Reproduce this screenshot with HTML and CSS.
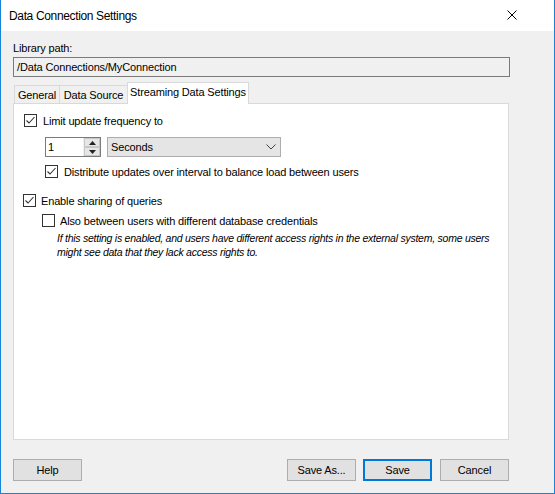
FILE: index.html
```html
<!DOCTYPE html>
<html>
<head>
<meta charset="utf-8">
<link rel="stylesheet" href="styles.css">
</head>
<body>
<div class="window">
  <div class="titlebar">
    <span class="title">Data Connection Settings</span>
    <svg class="close" width="10" height="10" viewBox="0 0 10 10"><path d="M0.5 0.5L9.5 9.5M9.5 0.5L0.5 9.5" stroke="#000" stroke-width="1" fill="none"/></svg>
  </div>
  <div class="body">
    <div class="label">Library path:</div>
    <div class="pathbox">/Data Connections/MyConnection</div>
    <div class="tabs">
      <div class="tab t1">General</div>
      <div class="tab t2">Data Source</div>
      <div class="tab active">Streaming Data Settings</div>
    </div>
    <div class="panel">
      <div class="row r1">
        <span class="cb checked"><svg width="11" height="11" viewBox="0 0 11 11"><path d="M1.5 5.5L4 8L9.5 2" stroke="#333" stroke-width="1.1" fill="none"/></svg></span>
        <span>Limit update frequency to</span>
      </div>
      <div class="controls">
        <div class="spin">
          <div class="num">1</div>
          <div class="arrows">
            <div class="arr"><svg width="7" height="4" viewBox="0 0 7 4"><path d="M0 4L3.5 0L7 4Z" fill="#222"/></svg></div>
            <div class="arr"><svg width="7" height="4" viewBox="0 0 7 4"><path d="M0 0L3.5 4L7 0Z" fill="#222"/></svg></div>
          </div>
        </div>
        <div class="combo">
          <span>Seconds</span>
          <svg width="10" height="6" viewBox="0 0 10 6"><path d="M0.5 0.5L5 5L9.5 0.5" stroke="#444" stroke-width="1" fill="none"/></svg>
        </div>
      </div>
      <div class="row r2">
        <span class="cb checked"><svg width="11" height="11" viewBox="0 0 11 11"><path d="M1.5 5.5L4 8L9.5 2" stroke="#333" stroke-width="1.1" fill="none"/></svg></span>
        <span>Distribute updates over interval to balance load between users</span>
      </div>
      <div class="row r3">
        <span class="cb checked"><svg width="11" height="11" viewBox="0 0 11 11"><path d="M1.5 5.5L4 8L9.5 2" stroke="#333" stroke-width="1.1" fill="none"/></svg></span>
        <span>Enable sharing of queries</span>
      </div>
      <div class="row r4">
        <span class="cb"></span>
        <span>Also between users with different database credentials</span>
      </div>
      <div class="note">If this setting is enabled, and users have different access rights in the external system, some users might see data that they lack access rights to.</div>
    </div>
    <div class="buttons">
      <div class="btn">Help</div>
      <div class="spacer"></div>
      <div class="btn">Save As...</div>
      <div class="btn default">Save</div>
      <div class="btn last">Cancel</div>
    </div>
  </div>
</div>
</body>
</html>
```
FILE: styles.css
```css
html, body { margin: 0; padding: 0; }
body {
  font-family: "Liberation Sans", Arial, sans-serif;
  font-size: 11px;
  letter-spacing: -0.15px;
  color: #000;
  background: #fff;
}
.window {
  width: 555px;
  height: 494px;
  box-sizing: border-box;
  border: 1px solid #1883d7;
  border-top: none;
  background: #f0f0f0;
  display: flex;
  flex-direction: column;
}
.titlebar {
  height: 31px;
  background: #fff;
  display: flex;
  align-items: center;
  padding: 0 0 0 8px;
  box-sizing: border-box;
}
.title { flex: 1; font-size: 12px; letter-spacing: -0.35px; padding-top: 1px; }
.close { margin-right: 37px; margin-bottom: 2px; }
.body {
  flex: 1;
  padding: 0 0 0 12px;
  display: flex;
  flex-direction: column;
}
.label { margin-top: 10px; height: 15px; line-height: 15px; }
.pathbox {
  margin-top: 1px;
  height: 20px;
  box-sizing: border-box;
  border: 1px solid #7a7a7a;
  width: 497px;
  background: #f0f0f0;
  line-height: 18px;
  padding-left: 3px;
}
.tabs {
  margin-top: 5px;
  display: flex;
  align-items: flex-end;
  padding-left: 1px;
  height: 21px;
  position: relative;
  z-index: 1;
}
.tab {
  height: 18px;
  line-height: 18px;
  box-sizing: border-box;
  border: 1px solid #d9d9d9;
  border-bottom: none;
  border-right: none;
  background: #f0f0f0;
  text-align: center;
}
.t1 { width: 45px; }
.t2 { width: 68px; }
.tab.active {
  width: 122px;
  height: 22px;
  line-height: 19px;
  background: #fff;
  border-right: 1px solid #d9d9d9;
  margin-bottom: -1px;
}
.panel {
  width: 496px;
  height: 337px;
  box-sizing: border-box;
  border: 1px solid #d9d9d9;
  background: #fff;
  padding: 9px 0 0 9px;
}
.row { display: flex; align-items: center; height: 15px; }
.cb {
  width: 13px;
  height: 13px;
  box-sizing: border-box;
  border: 1px solid #333;
  background: #fff;
  display: inline-flex;
  align-items: center;
  justify-content: center;
  margin-right: 6px;
  flex: none;
}
.r1 { margin-left: 1px; margin-top: 0px; }
.controls { display: flex; margin: 9px 0 0 22px; height: 20px; }
.spin {
  width: 56px; height: 20px; box-sizing: border-box;
  border: 1px solid #7a7a7a; display: flex; background: #fff;
}
.num { flex: 1; padding-left: 2px; line-height: 18px; }
.arrows {
  width: 16px; display: flex; flex-direction: column;
  border-left: 1px solid #f0f0f0;
}
.arr {
  flex: 1; display: flex; align-items: center; justify-content: center;
  background: #e6e6e6; border: 1px solid #c8c8c8;
}
.combo {
  margin-left: 6px;
  width: 174px; height: 20px; box-sizing: border-box;
  border: 1px solid #adadad; background: #e5e5e5;
  display: flex; align-items: center; justify-content: space-between;
  padding: 0 4px 0 3px;
}
.r2 { margin: 7px 0 0 22px; }
.r3 { margin-top: 14px; margin-left: 0; }
.r3 .cb { margin-right: 5px; }
.r4 { margin: 5px 0 0 19px; }
.r4 .cb { margin-right: 5px; }
.note {
  margin: 3px 0 0 34px;
  font-style: italic;
  font-size: 10.5px;
  line-height: 14px;
  width: 450px;
  letter-spacing: -0.25px;
}
.buttons {
  display: flex;
  margin-top: 19px;
  width: 497px;
}
.spacer { flex: 1; }
.btn {
  width: 69px; height: 22px; box-sizing: border-box;
  border: 1px solid #adadad; background: #e1e1e1;
  display: flex; align-items: center; justify-content: center;
  margin-left: 7px;
}
.btn:first-child { margin-left: 0; }
.btn.last { margin-left: 8px; margin-right: 1px; }
.btn.default { border: 2px solid #0078d7; }
```
